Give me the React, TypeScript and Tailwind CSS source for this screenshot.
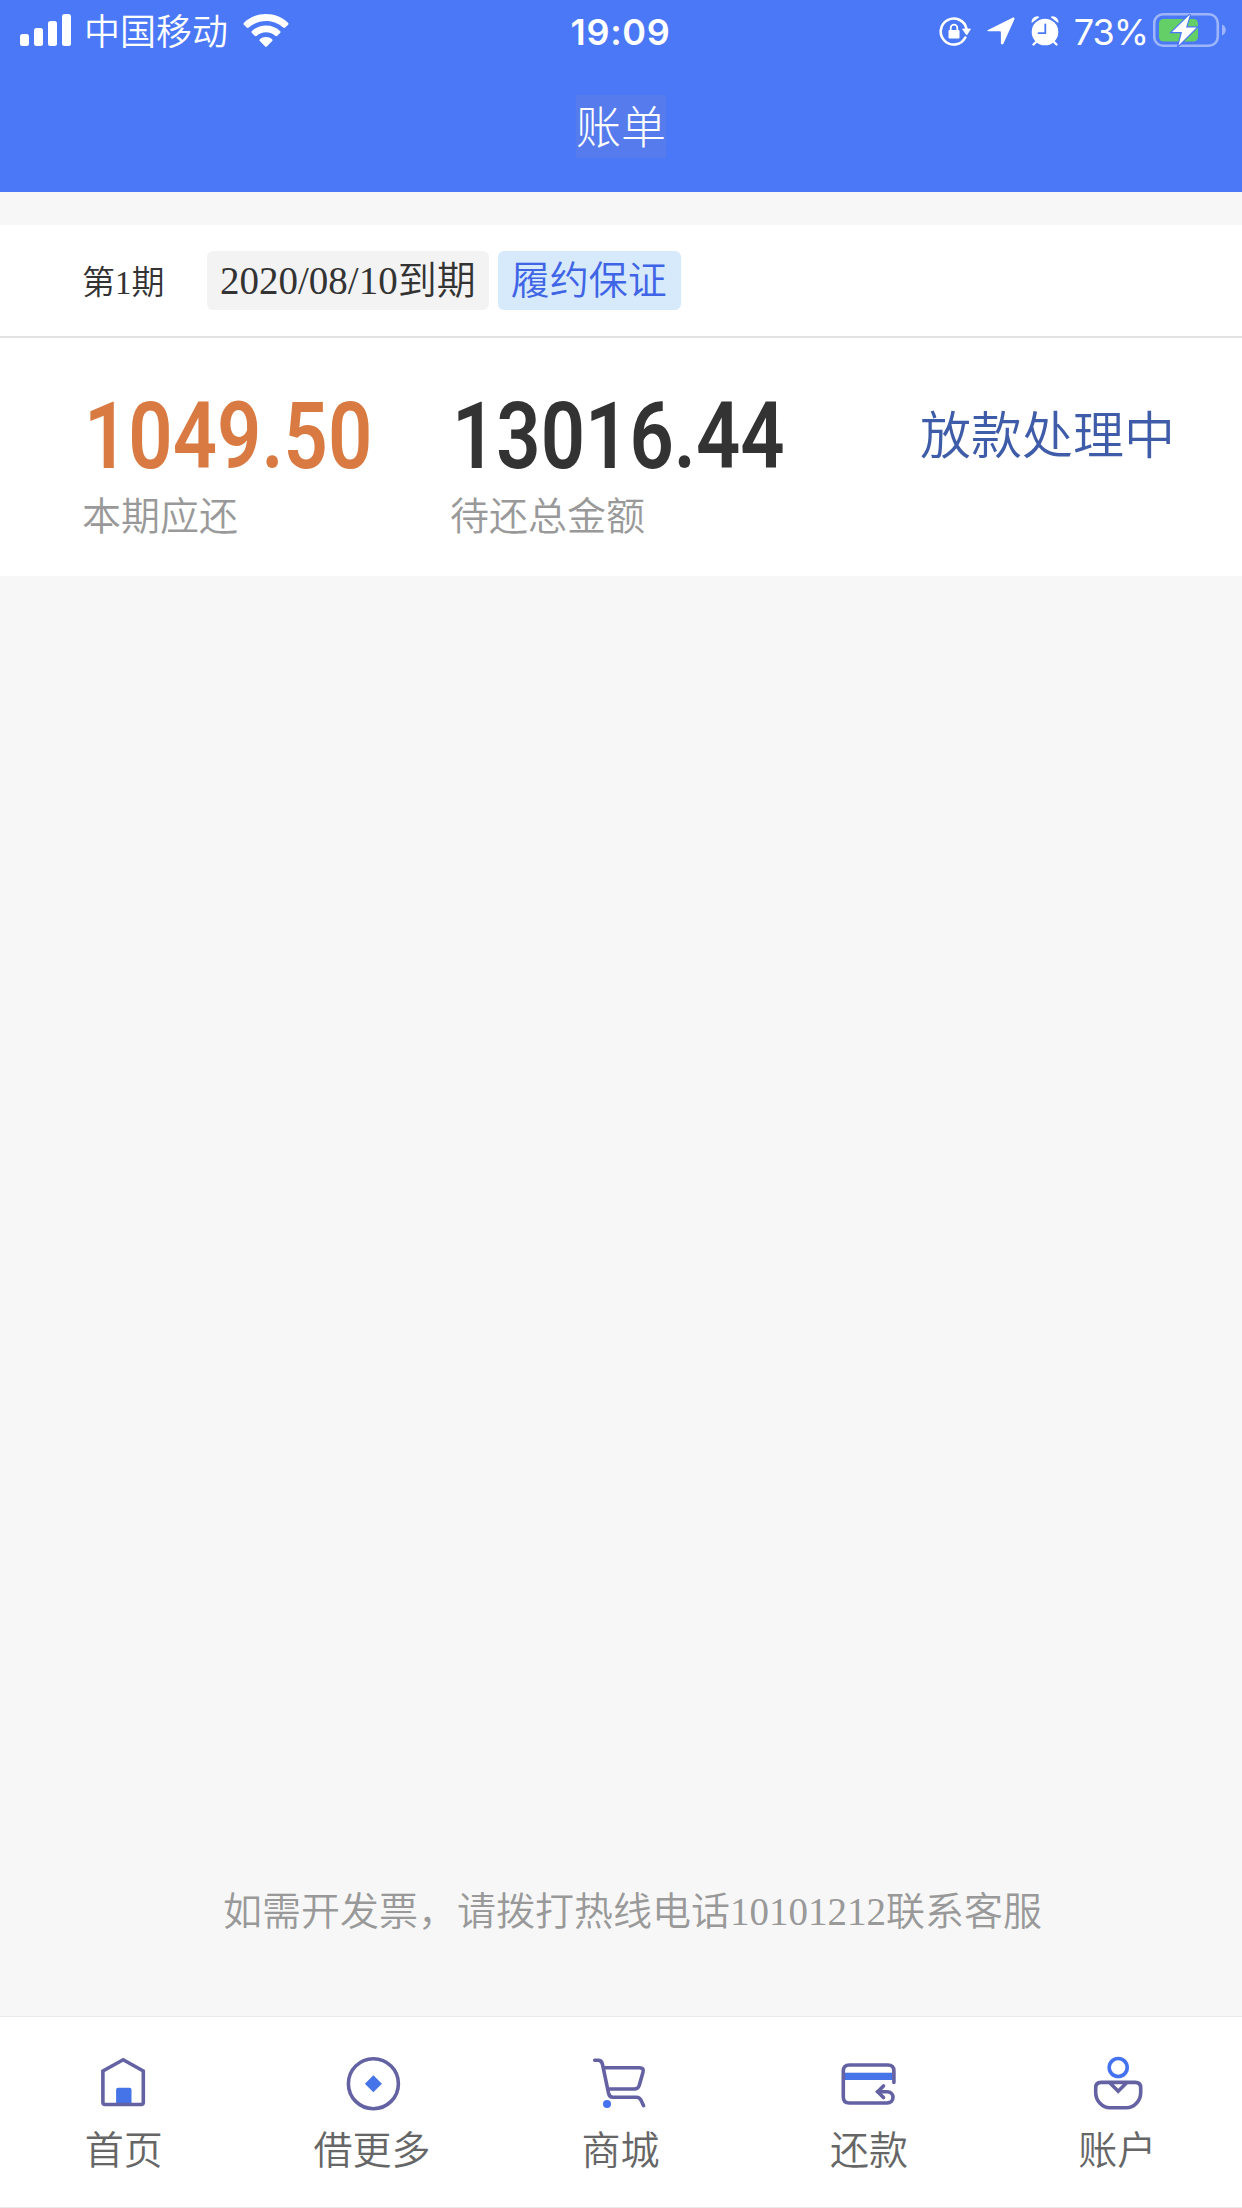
import type { ReactNode } from "react";

const SignalIcon = () => (
  <svg className="w-[51px] h-8" viewBox="0 0 51 32" fill="#fff">
    <rect x="0" y="20" width="9" height="12" rx="2.5" />
    <rect x="14" y="14" width="9" height="18" rx="2.5" />
    <rect x="28" y="7" width="9" height="25" rx="2.5" />
    <rect x="42" y="0" width="9" height="32" rx="2.5" />
  </svg>
);

const WifiIcon = () => (
  <svg className="w-[46px] h-[33px]" viewBox="0 0 46 33" fill="#fff">
    <path d="M23 0C14.500 0 6.800 3.300 1 8.700C0.300 9.400 0.300 10.200 0.900 10.800L3.700 13.600C4.300 14.200 5.100 14.200 5.700 13.600C10.300 9.500 16.400 7 23 7C29.600 7 35.700 9.500 40.300 13.600C40.900 14.200 41.700 14.200 42.300 13.600L45.100 10.800C45.700 10.200 45.700 9.400 45 8.700C39.200 3.300 31.500 0 23 0Z" />
    <path d="M23 11.500C17.600 11.500 12.700 13.500 9 16.900C8.300 17.500 8.300 18.400 8.900 19L11.700 21.800C12.300 22.400 13.100 22.400 13.800 21.800C16.200 19.600 19.400 18.300 23 18.300C26.600 18.300 29.800 19.600 32.200 21.800C32.900 22.400 33.700 22.400 34.300 21.800L37.100 19C37.700 18.400 37.700 17.500 37 16.900C33.300 13.500 28.400 11.500 23 11.500Z" />
    <path d="M23 23C20.600 23 18.500 23.900 16.900 25.300C16.300 25.900 16.300 26.600 16.800 27.100L21.900 32.200C22.600 32.900 23.400 32.900 24.100 32.200L29.200 27.100C29.700 26.600 29.700 25.900 29.100 25.300C27.500 23.900 25.400 23 23 23Z" />
  </svg>
);

const RotationLockIcon = () => (
  <svg className="mt-[3px] w-8 h-[30px]" viewBox="0 0 32 30" fill="none" stroke="#fff">
    <path d="M26.300 20.500A13 13 0 1 1 27.500 12" strokeWidth="2.600" strokeLinecap="round" />
    <path d="M23.500 12H31.500L27.700 18Z" fill="#fff" strokeWidth="0.800" strokeLinejoin="round" />
    <rect x="9.500" y="13" width="11" height="8.500" rx="1" fill="#fff" stroke="none" />
    <path d="M11.700 13.500V11A3.300 3.300 0 0 1 18.300 11V13.500" strokeWidth="1.800" />
  </svg>
);

const LocationIcon = () => (
  <svg className="mt-[2px] w-7 h-7" viewBox="0 0 28 28" fill="#fff">
    <path d="M1 13L25.500 0.700C27 0 28 1 27.300 2.500L16.500 26.500C15.800 28 13.900 27.700 13.900 26V15.500C13.900 14.600 13.500 14.200 12.600 14.200H1.500C0 14.200 -0.300 13.600 1 13Z" />
  </svg>
);

const AlarmIcon = () => (
  <svg className="mt-px w-7 h-[30px]" viewBox="0 0 28 30">
    <circle cx="14" cy="16" r="13.300" fill="#fff" />
    <path d="M0.800 7C-0.500 3.500 4.500 -1.500 8.500 1Z" fill="#fff" />
    <path d="M27.200 7C28.500 3.500 23.500 -1.500 19.500 1Z" fill="#fff" />
    <path d="M5 26L2.500 28.500M23 26L25.500 28.500" stroke="#fff" strokeWidth="2.400" strokeLinecap="round" />
    <path d="M14.300 8.500V17.200H7.500" fill="none" stroke="#4b78f7" strokeWidth="1.800" strokeLinecap="round" />
  </svg>
);

const BatteryIcon = () => (
  <svg className="w-[73px] h-9" viewBox="0 0 73 36">
    <rect x="1.200" y="2.200" width="63.600" height="31.600" rx="9" fill="none" stroke="#9db6fb" strokeWidth="2.600" />
    <path d="M69 12.500C74 14.500 74 21.500 69 23.500Z" fill="#9db6fb" />
    <rect x="6" y="7" width="39" height="22.500" rx="4.500" fill="#65cf67" />
    <path
      d="M37 2.500L19 20H29L25.500 33.500L43.500 15.500H33Z"
      fill="#fff"
      stroke="#4b78f7"
      strokeWidth="2.400"
      paintOrder="stroke"
    />
  </svg>
);

const TabIcon = ({ children }: { children: ReactNode }) => (
  <svg
    className="w-[60px] h-[60px]"
    viewBox="0 0 60 60"
    fill="none"
    stroke="#6462a2"
    strokeWidth="3.600"
    strokeLinecap="round"
    strokeLinejoin="round"
  >
    {children}
  </svg>
);

const tabs = [
  {
    name: "首页",
    icon: (
      <TabIcon>
        <rect x="22.100" y="33.700" width="15.400" height="17" rx="2" fill="#4573e8" stroke="none" />
        <path d="M29.200 5.700L49.300 17V48.300Q49.300 50.500 47.100 50.500H11.100Q8.900 50.500 8.900 48.300V17Z" strokeLinejoin="miter" />
      </TabIcon>
    ),
  },
  {
    name: "借更多",
    icon: (
      <TabIcon>
        <circle cx="30.400" cy="29.700" r="25" />
        <path d="M30.400 21.200L38.900 29.700L30.400 38.200L21.900 29.700Z" fill="#4573e8" stroke="none" />
      </TabIcon>
    ),
  },
  {
    name: "商城",
    icon: (
      <TabIcon>
        <path d="M3.700 6.300H7Q10.700 6.300 11.500 10.300L17.600 39.500Q18.500 43.300 22 43.300H45.500Q48.500 43.300 50 46.200L52.600 51.700" />
        <path d="M12.600 13.700H48.500Q53.400 13.700 51.900 18.500L48.200 31.500Q47 35 43.500 35H17" />
        <circle cx="16" cy="50" r="4" fill="#4573f0" stroke="none" />
      </TabIcon>
    ),
  },
  {
    name: "还款",
    icon: (
      <TabIcon>
        <rect x="5.500" y="18.700" width="48" height="7.300" fill="#4573e8" stroke="none" />
        <path d="M54.900 28.500V17Q54.900 11 48.900 11H10.300Q4.300 11 4.300 17V43Q4.300 49 10.300 49H48C56 49 56 37.700 48 37.700H38.500" />
        <path d="M44.500 31.900L38.700 37.700L44.500 43.500" strokeLinejoin="miter" />
      </TabIcon>
    ),
  },
  {
    name: "账户",
    icon: (
      <TabIcon>
        <circle cx="30.200" cy="13.500" r="9" stroke="#4573f0" />
        <path d="M13.200 28.400H47.200Q52.700 28.400 52.700 33.900V38.500C52.700 47 46 53.800 38.500 53.800H21.900C14.400 53.800 7.700 47 7.700 38.500V33.900Q7.700 28.400 13.200 28.400Z" />
        <path d="M22.500 29.500L30.200 37.200L37.900 29.500" strokeLinejoin="miter" />
      </TabIcon>
    ),
  },
];

const Header = () => (
  <header className="h-48 bg-[#4b78f7] text-white">
    {/* STATUS BAR */}
    <div className="h-[60px] grid grid-cols-[1fr_auto_1fr] items-center pl-5 pr-4 font-['Inter','Noto_Sans_CJK_SC',sans-serif] text-[36px] leading-none">
      <div className="flex items-center">
        <SignalIcon />
        <span className="ml-[13px] mr-[15px] pt-[3px] font-[350]">中国移动</span>
        <WifiIcon />
      </div>
      <span className="mr-[5px] pt-[3px] font-semibold tracking-[0.7px]">19:09</span>
      <div className="flex items-center justify-end">
        <RotationLockIcon />
        <span className="ml-4">
          <LocationIcon />
        </span>
        <span className="ml-4">
          <AlarmIcon />
        </span>
        <span className="ml-[15px] mr-[5px] pt-[3px] tracking-[-1px]">73%</span>
        <BatteryIcon />
      </div>
    </div>
    <div className="flex justify-center pt-[35px]">
      <h1 className="h-[63px] bg-[#567bec] pt-[3px] text-[45px] leading-[63px] font-light">账单</h1>
    </div>
  </header>
);

const Amount = ({ value, label, className }: { value: string; label: string; className: string }) => (
  <div className={className}>
    <div className="h-[67px] w-fit ml-[2px] pt-[2px] origin-left scale-x-[0.835] font-['Roboto',sans-serif] text-[93px] leading-[67px] font-semibold whitespace-nowrap">
      {value}
    </div>
    <div className="mt-[20px] text-[39px] leading-[58px] text-[#999] font-[350]">{label}</div>
  </div>
);

const Bill = () => (
  <section className="mt-[33px] h-[351px] bg-white">
    <div className="h-[113px] flex items-center border-b-2 border-[#e2e2e2] pl-[82px] text-[#333] font-[350]">
      <span className="w-[125px] pt-[6px] text-[33px]">第1期</span>
      <span className="h-[59px] px-[13px] rounded-[6px] bg-[#f3f3f3] text-[39px] leading-[59px]">2020/08/10到期</span>
      <span className="ml-[9px] h-[59px] pl-[13px] pr-[14px] rounded-[6px] bg-[#d6eafc] text-[39px] leading-[59px] text-[#4064e6]">
        履约保证
      </span>
    </div>
    <div className="flex pl-[82px] pt-[63px]">
      <Amount value="1049.50" label="本期应还" className="w-[368px] text-[#d87a41]" />
      <Amount value="13016.44" label="待还总金额" className="w-[470px] text-[#333]" />
      <div className="pt-[2px] text-[51px] leading-[68px] text-[#3e5ca8] whitespace-nowrap font-[350]">放款处理中</div>
    </div>
  </section>
);

const TabBar = () => (
  <nav className="h-48 grid grid-cols-5 border-y border-[#e8e8e8] bg-white text-[#666]">
    {tabs.map((tab) => (
      <div key={tab.name} className="flex flex-col items-center pt-[37px]">
        {tab.icon}
        <span className="mt-[8px] mr-px text-[39px] leading-[58px] font-[350]">{tab.name}</span>
      </div>
    ))}
  </nav>
);

const App = () => {
  return (
    <div className="h-[2208px] w-[1242px] flex flex-col overflow-hidden bg-[#f7f7f7] font-['Liberation_Serif','Noto_Sans_CJK_SC',serif]">
      <Header />
      <Bill />
      <p className="mt-auto mb-[75px] pl-[23px] text-center text-[39px] leading-[58px] text-[#999] font-[350]">
        如需开发票，请拨打热线电话10101212联系客服
      </p>
      <TabBar />
    </div>
  );
};

export default App;
